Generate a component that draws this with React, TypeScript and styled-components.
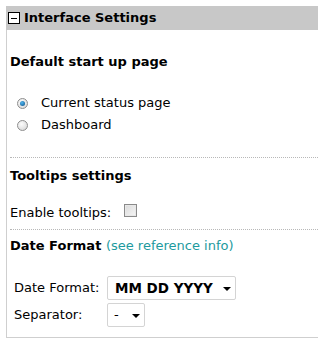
import React from "react";
import styled, { createGlobalStyle } from "styled-components";

const Global = createGlobalStyle`
  html, body { margin: 0; padding: 0; background: #fff; overflow: hidden; }
  body { font-family: "DejaVu Sans", Verdana, sans-serif; font-size: 13px; line-height: 16px; color: #000; }
`;

const Page = styled.div`
  padding: 6px 0 0 6px;
`;

const Panel = styled.div`
  border-left: 1px solid #cfcfcf;
  border-bottom: 1px solid #cfcfcf;
  width: 312px;
  height: 332px;
  box-sizing: border-box;
  display: flex;
  flex-direction: column;
`;

const Header = styled.div`
  background: #c8c8c8;
  height: 24px;
  margin-left: -1px;
  display: flex;
  align-items: center;
  gap: 4px;
  padding-left: 2px;
  font-weight: bold;
  font-size: 13px;
`;

const Toggle = styled.span`
  width: 10px;
  height: 10px;
  border: 1px solid #000;
  background: #fff;
  display: inline-flex;
  align-items: center;
  justify-content: center;
  &::after {
    content: "";
    width: 6px;
    height: 1px;
    background: #000;
  }
`;

const Body = styled.div`
  padding: 0 0 0 3px;
  display: flex;
  flex-direction: column;
`;

const SectionTitle = styled.div<{ $top: number; $bottom: number }>`
  font-weight: bold;
  margin-top: ${(p) => p.$top}px;
  margin-bottom: ${(p) => p.$bottom}px;
  height: 16px;
`;

const Link = styled.span`
  font-weight: normal;
  color: #1d9a9e;
`;

const RadioRow = styled.label`
  display: flex;
  align-items: center;
  gap: 13px;
  height: 22px;
  padding-left: 7px;
`;

const Radio = styled.span<{ $checked?: boolean }>`
  width: 11px;
  height: 11px;
  border-radius: 50%;
  box-sizing: border-box;
  border: 1px solid #8e8e8e;
  background: radial-gradient(circle at 40% 35%, #fdfdfd, #d2d2d2);
  display: inline-flex;
  align-items: center;
  justify-content: center;
  &::after {
    content: "";
    display: ${(p) => (p.$checked ? "block" : "none")};
    width: 5px;
    height: 5px;
    border-radius: 50%;
    background: radial-gradient(circle at 40% 35%, #4fb6f0, #0a4f86);
  }
`;

const Divider = styled.div<{ $top: number }>`
  margin-top: ${(p) => p.$top}px;
  border-top: 1px dotted #b8b8b8;
`;

const FieldRow = styled.div<{ $top: number }>`
  display: flex;
  align-items: center;
  gap: 13px;
  height: 16px;
  margin-top: ${(p) => p.$top}px;
`;

const Checkbox = styled.span`
  width: 11px;
  height: 11px;
  margin-top: -5px;
  border: 1px solid #8a8a8a;
  background: linear-gradient(135deg, #dadada, #f6f6f6);
  box-shadow: inset 0 0 0 1px #e8e8e8;
`;

const FormGrid = styled.div`
  display: grid;
  grid-template-columns: 93px auto;
  row-gap: 3px;
  align-items: center;
  padding-left: 4px;
  margin-top: 22px;
`;

const Select = styled.div<{ $bold?: boolean }>`
  justify-self: start;
  height: 24px;
  box-sizing: border-box;
  border: 1px solid #d4d4d4;
  border-radius: 2px;
  background: #fff;
  display: flex;
  align-items: center;
  gap: ${(p) => (p.$bold ? "10px" : "13px")};
  padding: 0 4px 0 ${(p) => (p.$bold ? "7px" : "6px")};
  font-weight: ${(p) => (p.$bold ? "bold" : "normal")};
  font-size: ${(p) => (p.$bold ? "13.5px" : "13px")};
`;

const Caret = styled.span`
  width: 0;
  height: 0;
  border-left: 4px solid transparent;
  border-right: 4px solid transparent;
  border-top: 4px solid #000;
  margin-top: 2px;
`;

export default function App() {
  return (
    <Page>
      <Global />
      <Panel>
        <Header>
          <Toggle />
          Interface Settings
        </Header>
        <Body>
          <SectionTitle $top={24} $bottom={22}>Default start up page</SectionTitle>
          <RadioRow>
            <Radio $checked />
            Current status page
          </RadioRow>
          <RadioRow>
            <Radio />
            Dashboard
          </RadioRow>
          <Divider $top={21} />
          <SectionTitle $top={10} $bottom={0}>Tooltips settings</SectionTitle>
          <FieldRow $top={21}>
            Enable tooltips:
            <Checkbox />
          </FieldRow>
          <Divider $top={8} />
          <SectionTitle $top={8} $bottom={0}>
            Date Format <Link>(see reference info)</Link>
          </SectionTitle>
          <FormGrid>
            <span>Date Format:</span>
            <Select $bold>
              MM DD YYYY
              <Caret />
            </Select>
            <span>Separator:</span>
            <Select>
              -
              <Caret />
            </Select>
          </FormGrid>
        </Body>
      </Panel>
    </Page>
  );
}
